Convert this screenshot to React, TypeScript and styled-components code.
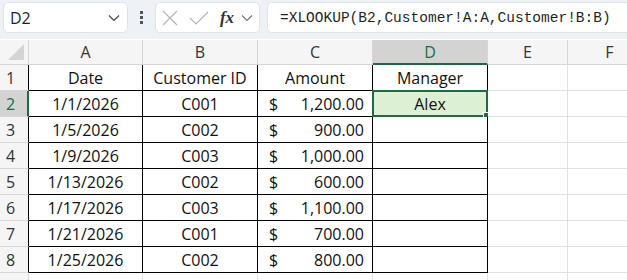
import React from 'react';
import styled, { createGlobalStyle } from 'styled-components';

const GlobalStyle = createGlobalStyle`
  html, body {
    margin: 0;
    padding: 0;
    background: #ffffff;
    overflow: hidden;
  }
  body {
    font-family: "Open Sans", "Noto Sans", Arial, sans-serif;
  }
`;

const Page = styled.div`
  width: 627px;
  height: 280px;
  overflow: hidden;
  background: #ffffff;
`;

const Toolbar = styled.div`
  height: 40px;
  background: #eef2f6;
  display: flex;
  align-items: flex-start;
  padding: 2px 0 0 3px;
  box-sizing: border-box;
  border-bottom: 1px solid #ffffff;
`;

const Box = styled.div<{ $w?: number }>`
  height: 31px;
  box-sizing: border-box;
  background: #ffffff;
  border: 1px solid #dfe3e8;
  border-radius: 5px;
  display: flex;
  align-items: center;
  width: ${(p) => (p.$w ? `${p.$w}px` : 'auto')};
  flex: ${(p) => (p.$w ? 'none' : '1')};
`;

const NameText = styled.span`
  flex: 1;
  padding-left: 6px;
  font-size: 16px;
  color: #1f1f1f;
  font-family: "Open Sans", "Noto Sans", sans-serif;
`;

const Dots = styled.div`
  width: 27px;
  display: flex;
  flex-direction: column;
  align-items: center;
  justify-content: center;
  gap: 2px;
  height: 31px;
  span {
    width: 3px;
    height: 3px;
    background: #555;
  }
`;

const IconSlot = styled.div<{ $w: number }>`
  width: ${(p) => p.$w}px;
  display: flex;
  align-items: center;
  justify-content: center;
`;

const Fx = styled.span`
  font-family: "Liberation Serif", "DejaVu Serif", serif;
  font-style: italic;
  font-weight: bold;
  font-size: 17px;
  color: #333;
`;

const Formula = styled.span`
  padding-left: 12px;
  font-family: "Liberation Mono", "DejaVu Sans Mono", monospace;
  font-size: 14.5px;
  color: #1f1f1f;
  white-space: nowrap;
`;

const Gap = styled.div<{ $w: number }>`
  width: ${(p) => p.$w}px;
  flex: none;
`;

const Sheet = styled.div`
  display: grid;
  grid-template-columns: 29px 114px 115px 115px 115px 80px 84px;
  grid-template-rows: 25px repeat(9, 26px);
`;

const Cell = styled.div<{
  $right?: string;
  $bottom?: string;
  $bg?: string;
}>`
  box-sizing: border-box;
  border-right: 1px solid ${(p) => p.$right || '#e1e1e1'};
  border-bottom: 1px solid ${(p) => p.$bottom || '#e1e1e1'};
  background: ${(p) => p.$bg || '#ffffff'};
  display: flex;
  align-items: center;
  justify-content: center;
  font-size: 16px;
  color: #111;
  white-space: nowrap;
  position: relative;
`;

const HeadCell = styled(Cell)<{ $sel?: boolean }>`
  background: ${(p) => (p.$sel ? '#d3d3d3' : '#f5f5f5')};
  color: ${(p) => (p.$sel ? '#1e6b3f' : '#333')};
  border-right-color: #d6d6d6;
  border-bottom: ${(p) => (p.$sel ? '2px solid #1e6b3f' : '1px solid #d6d6d6')};
  padding-top: ${(p) => (p.$sel ? '1px' : '0')};
`;

const RowHead = styled(Cell)<{ $sel?: boolean }>`
  background: ${(p) => (p.$sel ? '#d3d3d3' : '#f5f5f5')};
  color: ${(p) => (p.$sel ? '#1e6b3f' : '#333')};
  border-bottom-color: #d6d6d6;
  border-right: ${(p) => (p.$sel ? '2px solid #1e6b3f' : `1px solid ${p.$right || '#d6d6d6'}`)};
  justify-content: flex-start;
  padding-left: 6px;
`;

const Corner = styled(Cell)`
  background: #f5f5f5;
  border-right-color: #d6d6d6;
  border-bottom-color: #d6d6d6;
  &::after {
    content: '';
    position: absolute;
    right: 4px;
    bottom: 4px;
    width: 0;
    height: 0;
    border-left: 16px solid transparent;
    border-bottom: 16px solid #d4d4d4;
  }
`;

const Money = styled.div`
  display: flex;
  justify-content: space-between;
  width: 100%;
  padding: 0 8px 0 11px;
  box-sizing: border-box;
`;

const Selection = styled.div`
  position: absolute;
  left: -1px;
  top: -1px;
  right: -1px;
  bottom: -1px;
  border: 2px solid #1e6b3f;
  pointer-events: none;
  &::after {
    content: '';
    position: absolute;
    right: -5px;
    bottom: -5px;
    width: 6px;
    height: 6px;
    background: #1e6b3f;
    border: 1px solid #ffffff;
  }
`;

const rows = [
  ['1/1/2026', 'C001', '1,200.00', 'Alex'],
  ['1/5/2026', 'C002', '900.00', ''],
  ['1/9/2026', 'C003', '1,000.00', ''],
  ['1/13/2026', 'C002', '600.00', ''],
  ['1/17/2026', 'C003', '1,100.00', ''],
  ['1/21/2026', 'C001', '700.00', ''],
  ['1/25/2026', 'C002', '800.00', ''],
];

const Chevron = ({ color = '#444' }: { color?: string }) => (
  <svg width="12" height="8" viewBox="0 0 12 8">
    <path d="M1 1.5 L6 6.5 L11 1.5" fill="none" stroke={color} strokeWidth="1.2" />
  </svg>
);

export default function App() {
  const black = '#000000';
  return (
    <Page>
      <GlobalStyle />
      <Toolbar>
        <Box $w={125}>
          <NameText>D2</NameText>
          <IconSlot $w={26}>
            <Chevron />
          </IconSlot>
        </Box>
        <Dots>
          <span />
          <span />
          <span />
        </Dots>
        <Box $w={105}>
          <IconSlot $w={28}>
            <svg width="16" height="16" viewBox="0 0 16 16">
              <path d="M1 1 L15 15 M15 1 L1 15" stroke="#b4b4b4" strokeWidth="1.2" />
            </svg>
          </IconSlot>
          <IconSlot $w={30}>
            <svg width="20" height="14" viewBox="0 0 20 14">
              <path d="M1 7 L7 13 L19 1" fill="none" stroke="#b4b4b4" strokeWidth="1.2" />
            </svg>
          </IconSlot>
          <IconSlot $w={26}>
            <Fx>fx</Fx>
          </IconSlot>
          <IconSlot $w={14}>
            <Chevron color="#777" />
          </IconSlot>
        </Box>
        <Gap $w={7} />
        <Box style={{ borderRight: 'none', borderTopRightRadius: 0, borderBottomRightRadius: 0 }}>
          <Formula>=XLOOKUP(B2,Customer!A:A,Customer!B:B)</Formula>
        </Box>
      </Toolbar>
      <Sheet>
        <Corner />
        {['A', 'B', 'C', 'D', 'E', 'F'].map((c) => (
          <HeadCell key={c} $sel={c === 'D'}>
            {c}
          </HeadCell>
        ))}

        <RowHead $right={black}>1</RowHead>
        <Cell $right={black} $bottom={black}>Date</Cell>
        <Cell $right={black} $bottom={black}>Customer ID</Cell>
        <Cell $right={black} $bottom={black}>Amount</Cell>
        <Cell $right={black} $bottom={black}>Manager</Cell>
        <Cell />
        <Cell />

        {rows.map((r, i) => (
          <React.Fragment key={i}>
            <RowHead $sel={i === 0} $right={black}>
              {i + 2}
            </RowHead>
            <Cell $right={black} $bottom={black}>{r[0]}</Cell>
            <Cell $right={black} $bottom={black}>{r[1]}</Cell>
            <Cell $right={black} $bottom={black}>
              <Money>
                <span>$</span>
                <span>{r[2]}</span>
              </Money>
            </Cell>
            <Cell $right={black} $bottom={black} $bg={i === 0 ? '#dcf0d4' : undefined}>
              {r[3]}
              {i === 0 && <Selection />}
            </Cell>
            <Cell />
            <Cell />
          </React.Fragment>
        ))}

        <RowHead />
        <Cell />
        <Cell />
        <Cell />
        <Cell />
        <Cell />
        <Cell />
      </Sheet>
    </Page>
  );
}
